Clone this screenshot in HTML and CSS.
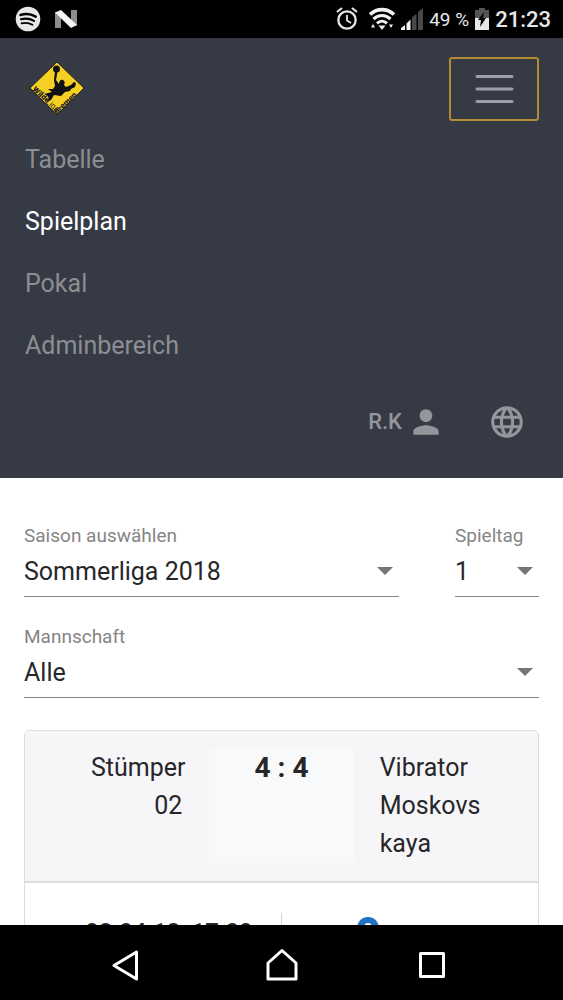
FILE: index.html
```html
<!DOCTYPE html>
<html lang="de">
<head>
<meta charset="utf-8">
<meta name="viewport" content="width=device-width, initial-scale=1">
<title>Wilde Liga Bremen – Spielplan</title>
<link rel="stylesheet" href="styles.css">
</head>
<body>
<div class="statusbar">
  <div class="status-group status-apps">
    <svg width="26" height="26" viewBox="0 0 26 26" aria-hidden="true">
      <circle cx="13" cy="13" r="12.3" fill="#e8e8e8"/>
      <g fill="none" stroke="#000" stroke-linecap="round">
        <path d="M5.500 9c5-1.500 10.500-1 15.200 1.600" stroke-width="2.500"/>
        <path d="M6 13.300c4.500-1.200 9-.7 13 1.600" stroke-width="2.100"/>
        <path d="M6.500 17.300c4-.9 7.500-.5 11 1.500" stroke-width="1.700"/>
      </g>
    </svg>
    <svg width="24" height="20" viewBox="0 0 24 20" aria-hidden="true">
      <path d="M1 3v16h6V6zM17 1h6v16l-6-4z" fill="#8d8d8d"/>
      <path d="M1 3.500L7 1l16 15-6 3z" fill="#f4f4f4"/>
    </svg>
  </div>
  <div class="status-group">
    <svg width="22" height="24" viewBox="0 0 22 24" fill="none" stroke="#e6e6e6" aria-hidden="true">
      <circle cx="11" cy="13" r="8.700" stroke-width="2.300"/>
      <path d="M11 8v5.500l4 2.500" stroke-width="1.800"/>
      <path d="M1 5l5-4M21 5l-5-4" stroke-width="2.200"/>
    </svg>
    <svg class="icon-wifi" width="26" height="24" viewBox="1 0 26 24" fill="none" stroke="#f2f2f2" aria-hidden="true">
      <path d="M2 7.500c7-6.500 17-6.500 24 0" stroke-width="3.600"/>
      <path d="M5.500 12c5-4.700 12-4.700 17 0" stroke-width="3.200"/>
      <path d="M9 16.300c3-2.800 7-2.800 10 0" stroke-width="3"/>
      <path d="M10.500 18.500h7L14 23z" fill="#f2f2f2" stroke="none"/>
      <path d="M3 20.500h4L5 17zM21 17.500h4l-2 3.500z" fill="#f2f2f2" stroke="none"/>
    </svg>
    <svg width="24" height="24" viewBox="0 0 24 24" aria-hidden="true">
      <path d="M1 23v-2l4-3v5zM6.500 23v-6.500l4-4V23z" fill="#f2f2f2"/>
      <path d="M12 23V10.500l4.500-4V23zM18 23V5l5-4v22z" fill="#484848"/>
    </svg>
    <span class="battery-level">49 %</span>
    <svg width="16" height="24" viewBox="0 0 16 24" aria-hidden="true">
      <path d="M1 3h4V1h6v2h4v8H1z" fill="#555"/>
      <path d="M1 11h14v12H1z" fill="#e8e8e8"/>
      <path d="M10 5l-6 8h3l-1 7 6-9H9z" fill="#000"/>
    </svg>
    <span class="clock">21:23</span>
  </div>
</div>

<header class="navbar">
  <div class="navbar-top">
    <a class="brand" href="#" aria-label="Wilde Liga Bremen">
      <svg width="56" height="56" viewBox="0 0 56 56" aria-hidden="true">
        <path d="M28 1L55 27 28 54 1 27z" fill="#f6cf25" stroke="#1e1e1e"/>
        <circle cx="27.500" cy="8" r="3.500" fill="#111"/>
        <path d="M26 10l2.500 1-1.500 8 3 4c0-3 2-5 4-4 2 1 2 3 1 5l2 2 5-2 3-3 2 1-1 4-4 2-1 2-5 1-4 4-7-1-3 5-2 1-1-5-4-2 8-2-4-3 5 0 2-3-1-6z" fill="#111"/>
        <text class="logo-text logo-bold" transform="translate(3 29) rotate(42)">Wilde</text>
        <text class="logo-text" transform="translate(16 42) rotate(38)">Liga</text>
        <text class="logo-text logo-bold" transform="translate(28 54) rotate(-44)">Bremen</text>
      </svg>
    </a>
    <button class="menu-toggle" type="button" aria-label="Menü" aria-expanded="true">
      <svg width="40" height="32" viewBox="0 0 40 32" stroke="#9b9ea6" stroke-width="3" stroke-linecap="round" aria-hidden="true">
        <path d="M3 3.500h35M3 16h35M3 28.500h35"/>
      </svg>
    </button>
  </div>
  <nav class="menu">
    <a class="menu-link" href="#">Tabelle</a>
    <a class="menu-link menu-link-active" href="#" aria-current="page">Spielplan</a>
    <a class="menu-link" href="#">Pokal</a>
    <a class="menu-link" href="#">Adminbereich</a>
  </nav>
  <div class="account">
    <button class="account-button" type="button">R.K
      <svg width="38" height="38" viewBox="0 0 24 24" fill="currentColor" aria-hidden="true">
        <path d="M12 12c2.210 0 4-1.790 4-4s-1.790-4-4-4-4 1.790-4 4 1.790 4 4 4zm0 2c-2.670 0-8 1.340-8 4v2h16v-2c0-2.660-5.330-4-8-4z"/>
      </svg>
    </button>
    <button class="account-button" type="button" aria-label="Sprache">
      <svg width="38" height="38" viewBox="0 0 24 24" fill="currentColor" aria-hidden="true">
        <path d="M11.990 2C6.470 2 2 6.480 2 12s4.470 10 9.990 10C17.520 22 22 17.520 22 12S17.520 2 11.990 2zm6.930 6h-2.950c-.32-1.250-.78-2.450-1.380-3.560 1.840.63 3.370 1.910 4.330 3.560zM12 4.040c.83 1.200 1.480 2.530 1.910 3.960h-3.820c.43-1.430 1.080-2.760 1.910-3.960zM4.260 14C4.100 13.360 4 12.690 4 12s.1-1.360.26-2h3.380c-.08.66-.14 1.320-.14 2s.06 1.340.14 2H4.260zm.82 2h2.950c.32 1.250.78 2.450 1.380 3.560-1.840-.63-3.370-1.900-4.330-3.560zm2.950-8H5.080c.96-1.660 2.490-2.930 4.330-3.560C8.810 5.550 8.350 6.750 8.030 8zM12 19.960c-.83-1.200-1.480-2.530-1.910-3.960h3.820c-.43 1.430-1.080 2.760-1.910 3.960zM14.340 14H9.660c-.09-.66-.16-1.320-.16-2s.07-1.350.16-2h4.680c.09.65.16 1.320.16 2s-.07 1.340-.16 2zm.25 5.560c.6-1.110 1.060-2.310 1.380-3.560h2.950c-.96 1.650-2.490 2.930-4.330 3.560zM16.360 14c.08-.66.14-1.320.14-2s-.06-1.340-.14-2h3.380c.16.64.26 1.310.26 2s-.1 1.360-.26 2h-3.380z"/>
      </svg>
    </button>
  </div>
</header>

<main class="content">
  <form class="filters">
    <div class="field">
      <label class="field-label" for="season">Saison auswählen</label>
      <div class="select-wrap">
        <select class="select" id="season"><option>Sommerliga 2018</option></select>
        <svg class="caret" width="16" height="8" viewBox="0 0 16 8" aria-hidden="true"><path d="M0 0h16L8 8z" fill="#757575"/></svg>
      </div>
    </div>
    <div class="field">
      <label class="field-label" for="matchday">Spieltag</label>
      <div class="select-wrap">
        <select class="select" id="matchday"><option>1</option></select>
        <svg class="caret" width="16" height="8" viewBox="0 0 16 8" aria-hidden="true"><path d="M0 0h16L8 8z" fill="#757575"/></svg>
      </div>
    </div>
    <div class="field field-wide">
      <label class="field-label" for="team">Mannschaft</label>
      <div class="select-wrap">
        <select class="select" id="team"><option>Alle</option></select>
        <svg class="caret" width="16" height="8" viewBox="0 0 16 8" aria-hidden="true"><path d="M0 0h16L8 8z" fill="#757575"/></svg>
      </div>
    </div>
  </form>

  <article class="match">
    <div class="match-header">
      <div class="team team-home">Stümper 02</div>
      <div class="score">4 : 4</div>
      <div class="team team-away">Vibrator Moskovskaya</div>
    </div>
    <div class="match-body">
      <time class="match-date">08.04.18, 17:00</time>
      <div class="match-place">
        <svg width="22" height="22" viewBox="0 0 22 22" aria-hidden="true">
          <circle cx="11" cy="11" r="11" fill="#1f71c4"/>
          <path d="M11 6a4 4 0 0 0-4 4c0 3 4 8 4 8s4-5 4-8a4 4 0 0 0-4-4z" fill="#fff"/>
        </svg>
      </div>
    </div>
  </article>
</main>

<div class="system-nav">
  <button class="system-button" type="button" aria-label="Zurück">
    <svg width="34" height="34" viewBox="0 0 34 34" fill="none" stroke="#fff" stroke-width="3" stroke-linejoin="round" aria-hidden="true"><path d="M24.500 4v27L2 17.500z"/></svg>
  </button>
  <button class="system-button" type="button" aria-label="Startseite">
    <svg width="34" height="34" viewBox="0 0 34 34" fill="none" stroke="#fff" stroke-width="3" stroke-linejoin="round" aria-hidden="true"><path d="M3 31V15L17 2.500 31 15v16z"/></svg>
  </button>
  <button class="system-button" type="button" aria-label="Übersicht">
    <svg width="34" height="34" viewBox="0 0 34 34" fill="none" stroke="#fff" stroke-width="3" stroke-linejoin="round" aria-hidden="true"><path d="M2.500 5.500h23v23h-23z"/></svg>
  </button>
</div>
</body>
</html>
```

FILE: styles.css
```css
* {
  box-sizing: border-box;
}

body {
  display: flex;
  flex-direction: column;
  height: 100vh;
  margin: 0;
  background: #fff;
  color: #27272a;
  font-family: Roboto, "Liberation Sans", sans-serif;
  font-size: 25px;
}

button {
  padding: 0;
  border: 0;
  background: none;
  color: inherit;
  font: inherit;
}

svg {
  display: block;
  flex: none;
}

.statusbar {
  display: flex;
  flex: none;
  align-items: center;
  justify-content: space-between;
  height: 38px;
  padding: 0 12px 0 15px;
  background: #000;
  color: #e8e8e8;
}

.status-group {
  display: flex;
  align-items: center;
  gap: 5px;
}

.status-apps {
  gap: 13px;
}

.icon-wifi {
  margin-left: 6px;
}

.battery-level {
  font-size: 19px;
}

.clock {
  font-size: 22px;
  font-weight: 500;
}

.navbar {
  flex: none;
  padding: 19px 24px 12px 25px;
  background: #363a44;
  color: #94969c;
}

.navbar-top {
  display: flex;
  align-items: center;
  justify-content: space-between;
  margin-bottom: 8px;
}

.brand {
  padding-left: 4px;
}

.logo-text {
  fill: #222;
  font-size: 8px;
}

.logo-bold {
  font-weight: 900;
}

.menu-toggle {
  display: grid;
  place-items: center;
  width: 90px;
  height: 64px;
  border: 2px solid #b48a32;
  border-radius: 3px;
}

.menu {
  display: flex;
  flex-direction: column;
}

.menu-link {
  color: #8c8e94;
  line-height: 62px;
  text-decoration: none;
}

.menu-link-active {
  color: #fff;
}

.account {
  display: flex;
  align-items: center;
  justify-content: flex-end;
  gap: 43px;
  height: 89px;
  padding-right: 13px;
}

.account-button {
  display: flex;
  align-items: center;
  gap: 5px;
  font-size: 22px;
  font-weight: 500;
}

.content {
  flex: 1;
  min-height: 0;
  overflow: hidden;
  padding: 46px 24px 0;
}

.filters {
  display: grid;
  grid-template-columns: minmax(0, 1fr) 84px;
  gap: 28px 56px;
}

.field-wide {
  grid-column: 1 / -1;
}

.field-label {
  display: block;
  color: #858585;
  font-size: 19px;
  line-height: 24px;
}

.select-wrap {
  position: relative;
}

.select {
  display: block;
  width: 100%;
  height: 49px;
  padding: 0 0 2px;
  border: 0;
  border-bottom: 1px solid #858585;
  border-radius: 0;
  appearance: none;
  background: none;
  color: inherit;
  font: inherit;
}

.caret {
  position: absolute;
  top: 19px;
  right: 6px;
  pointer-events: none;
}

.match {
  margin-top: 32px;
  border: 1px solid #dcdbe0;
  border-radius: 5px;
  overflow: hidden;
}

.match-header {
  display: grid;
  grid-template-columns: repeat(3, minmax(0, 1fr));
  padding: 18px 40px;
  border-bottom: 2px solid #dcdbe0;
  background: #f6f5f8;
  line-height: 38px;
}

.team {
  padding: 0 26px;
}

.team-home {
  padding-right: 27px;
  text-align: right;
}

.team-away {
  padding-right: 12px;
  overflow-wrap: anywhere;
}

.score {
  background: #f8f9fb;
  font-size: 28px;
  font-weight: 700;
  text-align: center;
}

.match-body {
  display: grid;
  grid-template-columns: repeat(2, minmax(0, 1fr));
  padding: 30px 32px;
}

.match-date {
  border-right: 1px solid #d5d5d8;
  font-size: 24px;
  font-weight: 500;
  line-height: 38px;
  text-align: center;
}

.match-place {
  padding: 4px 75px;
}

.system-nav {
  display: flex;
  flex: none;
  align-items: center;
  justify-content: center;
  gap: 119px;
  height: 75px;
  background: #000;
}

.system-button {
  padding-top: 5px;
}
```
